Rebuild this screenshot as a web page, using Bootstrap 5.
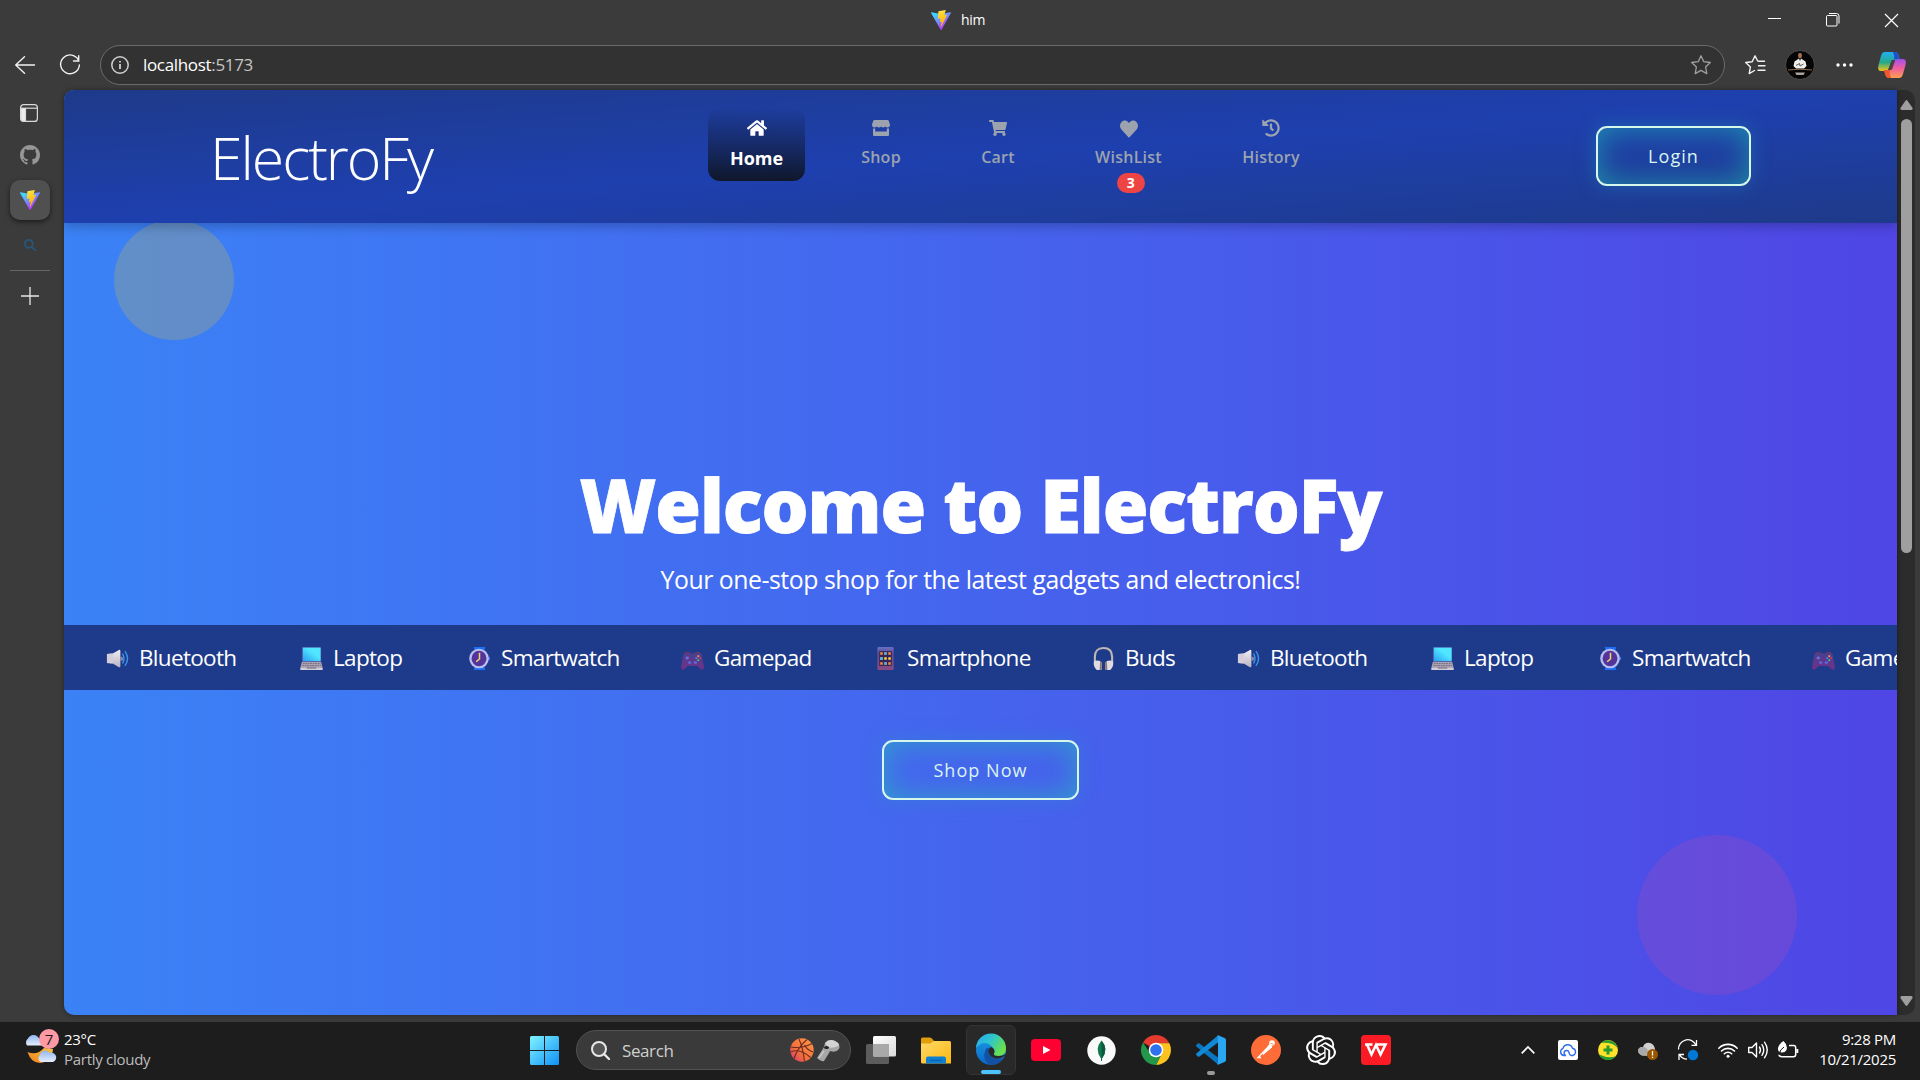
<!DOCTYPE html>
<html lang="en">
<head>
<meta charset="utf-8">
<title>him</title>
<link href="https://cdn.jsdelivr.net/npm/bootstrap@5.3.0/dist/css/bootstrap.min.css" rel="stylesheet">
<style>
body{width:1920px;height:1080px;overflow:hidden;background:#3b3b3b;color:#fff;font-family:"Open Sans","Noto Sans",sans-serif;line-height:1}
svg{display:block;flex:none;overflow:visible}
.titlebar{height:40px;padding:0 22px 0 931px}
.titlebar .tab-name{font-size:14px;margin-left:10px;letter-spacing:-.3px}
.winbtns{gap:45px}
.toolbar{height:50px;padding:0 12px 0 15px}
.address{width:1625px;height:40px;margin-left:20px;padding:0 13px 0 10px;background:#323232;border:1px solid #6b6b6b;border-radius:20px}
.address .url{font-size:17px;letter-spacing:-.33px;margin:-2px 0 0 14px;white-space:nowrap}
.address .port{color:#c5c5c5}
.workspace{height:925px}
.rail{width:64px;padding:14px 4px 0 0}
.rail-tile{width:40px;height:40px;background:#505050;border-radius:10px;box-shadow:0 2px 5px rgba(0,0,0,.55)}
.rail-line{width:40px;height:1px;background:#666}
.viewport{width:1833px;height:925px;border-radius:10px 0 0 10px;overflow:hidden;background:linear-gradient(to right,#3b82f6,#4f46e5);box-shadow:0 0 5px rgba(0,0,0,.4)}
.sitenav{height:133px;background:linear-gradient(to bottom right,#1e3a8a,#1e40af,#1e3a8a);box-shadow:0 4px 10px rgba(0,0,0,.22);z-index:2;padding:0 146px 0 146px}
.logo-text{font-size:59px;font-weight:300;letter-spacing:-2.05px;line-height:60px;padding-top:37px;white-space:nowrap;width:498px}
.navtab{font-size:16px;font-weight:600;letter-spacing:.25px;color:#9ca3af;white-space:nowrap}
.navtab svg{fill:#9ca3af}
.navtab.current{width:97px;height:73px;border-radius:12px;background:linear-gradient(to bottom,rgba(15,23,42,0),#0f172a);color:#fff;font-size:18px;font-weight:700;letter-spacing:0}
.navtab.current svg{fill:#fff}
.count{height:20px;width:28px;border-radius:10px;background:#ef4444;color:#fff;font-size:14px;font-weight:700}
.glowbtn{height:60px;border:2px solid #d6f8ea;border-radius:11px;color:#d9f5f0;font-size:18px;letter-spacing:1.05px;background:transparent;box-shadow:inset 0 0 30px rgba(32,200,180,.58),0 0 20px rgba(40,150,200,.38);padding:0}
.glowbtn:hover{color:#d9f5f0}
.hero{height:792px;z-index:1}
.deco1{width:120px;height:120px;left:50px;top:-3px;background:#facc15;opacity:.2}
.deco2{width:160px;height:160px;left:1573px;top:612px;background:#ec4899;opacity:.16}
.headline{font-size:74px;font-weight:800;letter-spacing:-1.1px;-webkit-text-stroke:.8px #fff;margin:242px 0 0;line-height:80px;white-space:nowrap}
.subline{font-size:24.8px;letter-spacing:-.46px;margin:17px 0 0;line-height:34px;white-space:nowrap}
.ticker{height:65px;background:#1e3a8a;margin-top:29px;padding:1px 0 0 42px;font-size:22.5px;letter-spacing:-.68px;overflow:hidden;white-space:nowrap}
.ticker .goods{flex:none;display:flex;align-items:center}
.ticker .goods svg{margin-right:10px}
.w-blue{width:194px}.w-lap{width:168px}.w-watch{width:213px}.w-pad{width:193px}.w-phone{width:218px}.w-buds{width:145px}
.scroller{width:18px;height:925px;background:#2c2c2c;border-radius:0 10px 10px 0;padding:10px 0 9px}
.thumb{width:11px;height:434px;border-radius:6px;background:#9f9f9f}
.taskbar{height:59px;margin-top:6px;background:#1d1d1d;border-top:1px solid #3a3a3a;padding-bottom:2px}
.weather{width:519px;padding-left:24px;font-size:15px;letter-spacing:-.28px}
.dim{color:#bcbcbc}
.tile{width:50px;height:50px;border-radius:6px;flex:none}
.tile.active-app{background:#292929;border:1px solid #343434}
.dash{height:4px;border-radius:2px;bottom:0;left:50%;transform:translateX(-50%)}
.findbox{width:275px;height:40px;border-radius:20px;background:#3a3a3a;border:1px solid #525252;margin:0 5px 0 7px;padding:0 10px 0 14px;font-size:17px;letter-spacing:-.4px;color:#cfcfcf}
.apps{gap:5px}
.tray{width:399px}
.clock{font-size:15px;letter-spacing:-.28px;width:80px}
</style>
<script src="https://cdn.jsdelivr.net/npm/bootstrap@5.3.0/dist/js/bootstrap.bundle.min.js"></script>
</head>
<body>
<svg width="0" height="0" class="position-absolute">
<defs>
<linearGradient id="vA" x1="0" y1=".3" x2=".5" y2="1"><stop stop-color="#41d1ff"/><stop offset="1" stop-color="#bd34fe"/></linearGradient>
<linearGradient id="vB" x1=".4" y1="0" x2=".6" y2="1"><stop stop-color="#ffea83"/><stop offset=".1" stop-color="#ffdd35"/><stop offset="1" stop-color="#ffa800"/></linearGradient>
<linearGradient id="gWin" x1="0" y1="0" x2="1" y2="1"><stop stop-color="#80f4ff"/><stop offset="1" stop-color="#0f90f7"/></linearGradient>
<linearGradient id="gScr" x1="1" y1="0" x2="0" y2="1"><stop offset=".4" stop-color="#50e6ff"/><stop offset="1" stop-color="#2b9ff5"/></linearGradient>
<linearGradient id="gSpk" x1="0" y1="0" x2="0" y2="1"><stop stop-color="#f0eef4"/><stop offset="1" stop-color="#b9b3c2"/></linearGradient>
<linearGradient id="gPad" x1="0" y1="0" x2="0" y2="1"><stop stop-color="#4c3f8e"/><stop offset="1" stop-color="#71308a"/></linearGradient>
<linearGradient id="gPhone" x1="0" y1="0" x2="0" y2="1"><stop stop-color="#6a6fc4"/><stop offset=".3" stop-color="#5b4c93"/><stop offset="1" stop-color="#8a4a80"/></linearGradient>
<linearGradient id="gBall" x1="1" y1="0" x2="0" y2="1"><stop stop-color="#ff9a45"/><stop offset=".6" stop-color="#f4703c"/><stop offset="1" stop-color="#d6336c"/></linearGradient>
<linearGradient id="gFold" x1="0" y1="0" x2="1" y2="1"><stop stop-color="#ffd96b"/><stop offset="1" stop-color="#fdb80e"/></linearGradient>
<linearGradient id="gCloud" x1="0" y1="0" x2="0" y2="1"><stop stop-color="#8fb4f2"/><stop offset="1" stop-color="#e6effc"/></linearGradient>
<linearGradient id="gMoon" x1="1" y1="0" x2="0" y2="1"><stop stop-color="#f6c542"/><stop offset="1" stop-color="#f07f1c"/></linearGradient>
<linearGradient id="eA" x1="0" y1="0" x2="1" y2=".5"><stop stop-color="#2aa8ee"/><stop offset=".5" stop-color="#2cc5cf"/><stop offset="1" stop-color="#6be04c"/></linearGradient>
<linearGradient id="eB" x1="0" y1="0" x2="0" y2="1"><stop stop-color="#1b9de2"/><stop offset="1" stop-color="#0a66c9"/></linearGradient>
<linearGradient id="cA" x1="0" y1="0" x2="0" y2="1"><stop stop-color="#21b0f5"/><stop offset=".55" stop-color="#27a887"/><stop offset="1" stop-color="#f5c518"/></linearGradient>
<linearGradient id="cB" x1="0" y1="0" x2="0" y2="1"><stop stop-color="#a44df0"/><stop offset=".5" stop-color="#f0609a"/><stop offset="1" stop-color="#fca04c"/></linearGradient>
<linearGradient id="gTv" x1="0" y1="0" x2="1" y2="1"><stop stop-color="#fff"/><stop offset="1" stop-color="#dadada"/></linearGradient>
<symbol id="vite" viewBox="0 0 256 257" preserveAspectRatio="none"><path fill="url(#vA)" d="M255.153 37.938L134.897 252.976c-2.483 4.44-8.862 4.466-11.382.048L.875 37.958c-2.746-4.814 1.371-10.646 6.827-9.67l120.385 21.517a6.537 6.537 0 0 0 2.322-.004l117.867-21.483c5.438-.991 9.574 4.796 6.877 9.62Z"/><path fill="url(#vB)" d="M185.432.063L96.44 17.501a3.268 3.268 0 0 0-2.634 3.014l-5.474 92.456a3.268 3.268 0 0 0 3.997 3.378l24.777-5.718c2.318-.535 4.413 1.507 3.936 3.838l-7.361 36.047c-.495 2.426 1.782 4.5 4.151 3.78l15.304-4.649c2.372-.72 4.652 1.36 4.15 3.788l-11.698 56.621c-.732 3.542 3.979 5.473 5.943 2.437l1.313-2.028l72.516-144.72c1.215-2.423-.88-5.186-3.54-4.672l-25.505 4.922c-2.396.462-4.435-1.77-3.759-4.114l16.646-57.705c.677-2.35-1.37-4.583-3.769-4.113Z"/></symbol>
<symbol id="e-spk" viewBox="0 0 24 28" preserveAspectRatio="none"><path fill="url(#gSpk)" d="M1 8.5L7 8 13.500 3.500Q15 3 15 5V23Q15 25 13.500 24.500L7 20 1 19.500Z"/><path d="M1 8.5L7 8V20L1 19.500Z" fill="#d3ced9"/><path d="M15 11.500a2.500 2.500 0 0 1 0 5.500Z" fill="#8f89a3"/><path d="M17.500 8.500Q20 14 17.500 19.500M20 5.500Q25 14 20 22.500" fill="none" stroke="#3b94e8" stroke-width="1.500" stroke-linecap="round"/></symbol>
<symbol id="e-lap" viewBox="0 0 24 28" preserveAspectRatio="none"><rect x="2" y="0" width="20" height="18" rx="1" fill="#4a5aa8"/><rect x="3" y=".8" width="18.500" height="16.200" fill="url(#gScr)"/><path d="M2 18H22L23.500 24.500V28H.500V24.500Z" fill="#aca4b4"/><path d="M3 20H21.500M2.500 22.500H22" stroke="#6d6578" stroke-width="1" stroke-dasharray="1.800 .8"/><path d="M.500 25.500H23.500V28H.500Z" fill="#d3cdd8"/><rect x="7" y="24" width="10" height="2.500" fill="#8f879b"/></symbol>
<symbol id="e-watch" viewBox="0 0 24 28" preserveAspectRatio="none"><path d="M6 0H18L17 6H7ZM7 22H17L18 28H6Z" fill="#1f6ff2"/><rect x="20.500" y="12" width="2.500" height="4" rx="1" fill="#3a7bf0"/><ellipse cx="11.500" cy="14" rx="10.200" ry="12" fill="#b9bdf0"/><ellipse cx="11.500" cy="14" rx="7.800" ry="9.300" fill="#53349a"/><path d="M12 7V14.500L8.500 18" stroke="#f2d36b" stroke-width="1.600" fill="none"/></symbol>
<symbol id="e-pad" viewBox="0 0 24 28" preserveAspectRatio="none"><path d="M4 7H9.500L10.500 8H13.500L14.500 7H20Q22 8 22.500 15L24 25Q23 29.500 20 26.500L17 23H7L4 26.500Q1 29.500 0 25L1.500 15Q2 8 4 7Z" fill="url(#gPad)"/><path d="M4 6.800H9M15 6.800H20" stroke="#8a2f4a"/><circle cx="6.500" cy="13.500" r="1.800" fill="#6a6fe0"/><circle cx="9" cy="19" r="1.800" fill="#5b68d8"/><circle cx="15" cy="19" r="1.800" fill="#5b68d8"/><circle cx="18" cy="11" r="1.100" fill="#ffb43a"/><circle cx="20" cy="13.500" r="1.100" fill="#e84040"/><circle cx="16" cy="13.500" r="1.100" fill="#3fa0f0"/><circle cx="18" cy="16" r="1.100" fill="#3fd08a"/></symbol>
<symbol id="e-phone" viewBox="0 0 24 28" preserveAspectRatio="none"><rect x="3.500" y="0" width="17" height="28" rx="1.500" fill="url(#gPhone)"/><rect x="5.500" y="5" width="13" height="18" fill="#372456"/><path d="M6.500 8H17.500M6.500 20H17.500" stroke="#ff8b3d" stroke-width="3" stroke-dasharray="2.600 1.600"/><path d="M6.500 14H17.500" stroke="#ffd34a" stroke-width="3" stroke-dasharray="2.600 1.600"/><path d="M10.700 8h2.600M6.500 14h2.600M10.700 20h2.600" stroke="#38b6f5" stroke-width="3"/></symbol>
<symbol id="e-buds" viewBox="0 0 24 28" preserveAspectRatio="none"><path d="M3 17V12Q3 1.200 12 1.200T21 12V17" fill="none" stroke="#bdb6b4" stroke-width="2.200"/><path d="M2 17Q8 15 10 19V28H5Q1 24 2 17ZM22 17Q16 15 14 19V28H19Q23 24 22 17Z" fill="#dedbe2"/><path d="M8.500 17L10 19V28H8ZM15.500 17L14 19V28H16Z" fill="#8d7a72"/></symbol>
</defs>
</svg>

<header class="titlebar d-flex align-items-center">
  <svg width="20" height="20"><use href="#vite"/></svg>
  <span class="tab-name">him</span>
  <div class="winbtns d-flex align-items-center ms-auto">
    <svg width="13" height="14" fill="none" stroke="#fff"><path d="M0 5.500H13"/></svg>
    <svg width="14" height="14" fill="none" stroke="#fff"><rect x=".500" y="2.500" width="10.500" height="10.500" rx="1"/><path d="M3 .500H10.500Q13 .500 13 3V10.500"/></svg>
    <svg width="13" height="13" fill="none" stroke="#fff" stroke-width="1.200"><path d="M0 0L13 13M13 0L0 13"/></svg>
  </div>
</header>

<div class="toolbar d-flex align-items-center">
  <svg width="20" height="18" fill="none" stroke="#f2f2f2" stroke-width="1.400" stroke-linecap="round" stroke-linejoin="round"><path d="M9.500 .700L.700 9 9.500 17.300M.700 9H19.500"/></svg>
  <svg width="20" height="20" style="margin-left:25px" fill="none" stroke="#f2f2f2" stroke-width="1.400" stroke-linecap="round"><path d="M18.600 5.500A9.400 9.400 0 1 0 19.400 10M18.700 .700V6H13.500"/></svg>
  <div class="address d-flex align-items-center">
    <svg width="18" height="18" fill="none" stroke="#d0d0d0" stroke-width="1.500"><circle cx="9" cy="9" r="8.200"/><path d="M9 8V13M9 5V6.600" stroke-width="1.800"/></svg>
    <span class="url">localhost<span class="port">:5173</span></span>
    <svg class="ms-auto" width="20" height="20" viewBox="0 0 20 20" fill="none" stroke="#a0a0a0" stroke-width="1.300" stroke-linejoin="round"><path d="M10 .800L12.800 6.700 19.300 7.500 14.600 12 15.800 18.600 10 15.400 4.200 18.600 5.400 12 .700 7.500 7.200 6.700Z"/></svg>
  </div>
  <svg width="21" height="20" style="margin-left:20px" fill="none" stroke="#f2f2f2" stroke-width="1.400" stroke-linejoin="round" stroke-linecap="round"><path d="M19.500 6.200H14L12.700 6 10 .800 7.200 6.700.700 7.500 5.400 12 4.200 18.600 9.500 15.500M13.500 10.800H20M13 15.300H20"/></svg>
  <svg width="30" height="30" style="margin-left:19px"><circle cx="15" cy="15" r="14.500" fill="#050505" stroke="#4d4d4d"/><ellipse cx="15" cy="5.500" rx="2" ry="2.700" fill="#a4714d"/><path d="M12.500 9.500L14 8.500 15 11 16 8.500 17.500 9.500 20.500 11.500 21.500 16 19 18.500H11L8.500 16 9.500 11.500Z" fill="#f1efec"/><path d="M11 15.500L14.500 13.500 15 16 18.500 14" stroke="#555" fill="none"/><path d="M3 20Q15 18.500 27 20" stroke="#8d6b4e" fill="none"/><path d="M10 22.500H20L18.500 25H11.500Z" fill="#a9a49d"/></svg>
  <svg width="17" height="4" style="margin-left:21px" fill="#fff"><circle cx="2" cy="2" r="1.700"/><circle cx="8.500" cy="2" r="1.700"/><circle cx="15" cy="2" r="1.700"/></svg>
  <svg width="28" height="26" viewBox="0 0 28 26" style="margin-left:25px"><path d="M7 0H17Q20 0 21 5L22 8H14L10 18Q9 19 3 19 -1 19 .500 13L3 4Q4 0 7 0Z" fill="url(#cA)"/><path d="M15 0H17.500Q20 .500 20.500 4L21.500 7.500H16Q17 4 15 0Z" fill="#1f4fd0"/><path d="M21 26H11Q8 26 7 21L6 18H13L17 8Q18 7 25 7 29 7 27.500 13L25 22Q24 26 21 26Z" fill="url(#cB)"/><path d="M6 18H12Q11 22 13 26H11Q8 26 7 22Z" fill="#f2562f"/><path d="M13.500 8.500H17L14 17.500H10.500Z" fill="#4b4042"/></svg>
</div>

<main class="workspace d-flex">
  <aside class="rail d-flex flex-column align-items-center">
    <svg width="18" height="18" style="margin-right:2px" fill="none" stroke="#d9d9d9" stroke-width="1.200"><rect x=".600" y=".600" width="16.800" height="16.800" rx="3"/><path d="M1 4.200H17"/><path d="M1 4.500H5.500V17H3Q1 17 1 15Z" fill="#eee"/></svg>
    <svg width="20" height="20" viewBox="0 0 16 16" style="margin-top:23px" fill="#969696"><path d="M8 0C3.580 0 0 3.580 0 8c0 3.540 2.290 6.530 5.470 7.590.4.070.550-.170.550-.380 0-.190-.010-.820-.010-1.490-2.010.370-2.530-.490-2.690-.940-.090-.230-.480-.940-.820-1.130-.280-.150-.680-.520-.010-.530.630-.010 1.080.580 1.230.820.720 1.210 1.870.870 2.330.660.070-.520.280-.870.510-1.070-1.780-.2-3.640-.890-3.640-3.950 0-.870.310-1.590.820-2.150-.080-.2-.360-1.020.080-2.120 0 0 .670-.210 2.200.820.640-.180 1.320-.270 2-.270s1.360.090 2 .270c1.530-1.040 2.200-.820 2.200-.820.440 1.100.160 1.920.080 2.120.510.560.820 1.270.820 2.150 0 3.070-1.870 3.750-3.650 3.950.290.250.540.730.540 1.480 0 1.070-.010 1.930-.010 2.200 0 .210.150.460.550.380A8.010 8.010 0 0 0 16 8c0-4.420-3.580-8-8-8z"/></svg>
    <div class="rail-tile d-flex align-items-center justify-content-center" style="margin-top:15px"><svg width="20" height="20"><use href="#vite"/></svg></div>
    <svg width="12" height="12" style="margin-top:19px" fill="none" stroke="#25567d" stroke-width="1.700"><circle cx="4.800" cy="4.800" r="4"/><path d="M7.800 7.800L12 12"/></svg>
    <div class="rail-line" style="margin-top:19px"></div>
    <svg width="18" height="18" style="margin:16px 1px 0 0" stroke="#e8e8e8" stroke-width="1.300"><path d="M9 0V18M0 9H18"/></svg>
  </aside>

  <section class="viewport position-relative">
    <nav class="sitenav position-relative d-flex">
      <div class="logo-text">ElectroFy</div>
      <div class="d-flex align-items-start" style="width:640px">
        <div class="navtab current d-flex flex-column align-items-center" style="margin-top:18px">
          <svg width="20" height="18" viewBox="0 0 576 512" style="margin-top:11px"><path d="M280.370 148.260L96 300.110V464a16 16 0 0 0 16 16l112.060-.290a16 16 0 0 0 15.920-16V368a16 16 0 0 1 16-16h64a16 16 0 0 1 16 16v95.640a16 16 0 0 0 16 16.050L464 480a16 16 0 0 0 16-16V300L295.670 148.260a12.190 12.190 0 0 0-15.300 0zM571.600 251.470L488 182.560V44.050a12 12 0 0 0-12-12h-56a12 12 0 0 0-12 12v72.610L318.470 43a48 48 0 0 0-61 0L4.340 251.470a12 12 0 0 0-1.600 16.900l25.500 31A12 12 0 0 0 45.150 301l235.220-193.740a12.190 12.190 0 0 1 15.300 0L530.900 301a12 12 0 0 0 16.900-1.600l25.500-31a12 12 0 0 0-1.700-16.930z"/></svg>
          <span style="margin-top:12px">Home</span>
        </div>
        <div class="navtab d-flex flex-column align-items-center" style="margin:30px 0 0 56px;width:40px">
          <svg width="18" height="16" viewBox="0 0 18 16"><path d="M2.500 0H15.500Q16.500 0 16.800 1L18 4.500Q18 7.500 15.500 7.500 14 7.500 13.200 6.500 12.400 7.500 11.100 7.500T9 6.500Q8.200 7.500 6.900 7.500T4.800 6.500Q4 7.500 2.500 7.500 0 7.500 0 4.500L1.200 1Q1.500 0 2.500 0ZM1 8.500H3.200V11.500H14.800V8.500H17V15Q17 16 16 16H2Q1 16 1 15Z"/></svg>
          <span style="margin-top:13px">Shop</span>
        </div>
        <div class="navtab d-flex flex-column align-items-center" style="margin:30px 0 0 80px;width:34px">
          <svg width="18" height="16" viewBox="0 0 576 512"><path d="M528.120 301.319l47.273-208C578.806 78.301 567.391 64 551.990 64H159.208l-9.166-44.810C147.758 8.021 137.930 0 126.529 0H24C10.745 0 0 10.745 0 24v16c0 13.255 10.745 24 24 24h69.883l70.248 343.435C147.325 417.100 136 435.222 136 456c0 30.928 25.072 56 56 56s56-25.072 56-56c0-15.674-6.447-29.835-16.824-40h209.647C430.447 426.165 424 440.326 424 456c0 30.928 25.072 56 56 56s56-25.072 56-56c0-22.172-12.888-41.332-31.579-50.405l5.517-24.276c3.413-15.018-8.002-29.319-23.403-29.319H218.117l-6.545-32h293.145c11.206 0 20.920-7.754 23.403-18.681z"/></svg>
          <span style="margin-top:13px">Cart</span>
        </div>
        <div class="navtab d-flex flex-column align-items-center" style="margin:30px 0 0 80px;width:67px">
          <svg width="18" height="18" viewBox="0 16 512 480" preserveAspectRatio="none"><path d="M462.300 62.600C407.500 15.900 326 24.300 275.700 76.200L256 96.500l-19.700-20.300C186.100 24.300 104.500 15.900 49.700 62.600c-62.800 53.600-66.100 149.800-9.900 207.900l193.500 199.800c12.500 12.900 32.800 12.900 45.300 0l193.500-199.800c56.300-58.100 53-154.300-9.800-207.900z"/></svg>
          <span style="margin-top:11px">WishList</span>
          <span class="count d-flex align-items-center justify-content-center" style="margin:8px 0 0 5px">3</span>
        </div>
        <div class="navtab d-flex flex-column align-items-center" style="margin:29px 0 0 80px;width:58px">
          <svg width="18" height="18" viewBox="0 0 512 512"><path d="M504 255.531c.253 136.640-111.180 248.372-247.820 248.468-59.015.042-113.223-20.530-155.822-54.911-11.077-8.940-11.905-25.541-1.839-35.607l11.267-11.267c8.609-8.609 22.353-9.551 31.891-1.984C173.062 425.135 212.781 440 256 440c101.705 0 184-82.311 184-184 0-101.705-82.311-184-184-184-48.814 0-93.149 18.969-126.068 49.932l50.754 50.754c10.080 10.080 2.941 27.314-11.313 27.314H24c-8.837 0-16-7.163-16-16V38.627c0-14.254 17.234-21.393 27.314-11.314l49.372 49.372C129.209 34.136 189.552 8 256 8c136.810 0 247.747 110.780 248 247.531zm-180.912 78.784l9.823-12.630c8.138-10.463 6.253-25.542-4.210-33.679L288 256.349V152c0-13.255-10.745-24-24-24h-16c-13.255 0-24 10.745-24 24v135.651l65.409 50.874c10.463 8.137 25.541 6.253 33.679-4.210z"/></svg>
          <span style="margin-top:12px">History</span>
        </div>
      </div>
      <button class="btn glowbtn ms-auto" style="width:155px;margin-top:36px">Login</button>
    </nav>

    <div class="hero position-relative d-flex flex-column align-items-center">
      <div class="deco1 position-absolute rounded-circle"></div>
      <div class="deco2 position-absolute rounded-circle"></div>
      <h1 class="headline">Welcome to ElectroFy</h1>
      <p class="subline">Your one-stop shop for the latest gadgets and electronics!</p>
      <div class="ticker w-100 d-flex">
        <div class="goods w-blue"><svg width="23" height="23"><use href="#e-spk"/></svg><span>Bluetooth</span></div>
        <div class="goods w-lap"><svg width="23" height="23"><use href="#e-lap"/></svg><span>Laptop</span></div>
        <div class="goods w-watch"><svg width="23" height="23"><use href="#e-watch"/></svg><span>Smartwatch</span></div>
        <div class="goods w-pad"><svg width="23" height="23"><use href="#e-pad"/></svg><span>Gamepad</span></div>
        <div class="goods w-phone"><svg width="23" height="23"><use href="#e-phone"/></svg><span>Smartphone</span></div>
        <div class="goods w-buds"><svg width="23" height="23"><use href="#e-buds"/></svg><span>Buds</span></div>
        <div class="goods w-blue"><svg width="23" height="23"><use href="#e-spk"/></svg><span>Bluetooth</span></div>
        <div class="goods w-lap"><svg width="23" height="23"><use href="#e-lap"/></svg><span>Laptop</span></div>
        <div class="goods w-watch"><svg width="23" height="23"><use href="#e-watch"/></svg><span>Smartwatch</span></div>
        <div class="goods w-pad"><svg width="23" height="23"><use href="#e-pad"/></svg><span>Gamepad</span></div>
      </div>
      <button class="btn glowbtn" style="width:197px;margin-top:50px">Shop Now</button>
    </div>
  </section>

  <div class="scroller d-flex flex-column align-items-center">
    <svg width="13" height="10" fill="#9f9f9f"><path d="M5.500 .700Q6.500 -.500 7.500 .700L12.600 8Q13 9.500 11.500 10H1.500Q0 9.500 .400 8Z"/></svg>
    <div class="thumb" style="margin-top:9px"></div>
    <svg class="mt-auto" width="13" height="10" fill="#9f9f9f"><path d="M5.500 9.300Q6.500 10.500 7.500 9.300L12.600 2Q13 .500 11.500 0H1.500Q0 .500 .400 2Z"/></svg>
  </div>
</main>

<footer class="taskbar d-flex align-items-center">
  <div class="weather d-flex align-items-center">
    <svg width="36" height="36" viewBox="0 0 36 36" style="margin-top:-6px"><path d="M3 16.500a5 5 0 0 1 1-7A6 6 0 0 1 14 8l6 8.500Z" fill="url(#gCloud)"/><path d="M3.500 23Q13 27 20 19L29 20Q28 33 16 34 7 34 3.500 23Z" fill="url(#gMoon)"/><path d="M17 33a4 4 0 0 1-1-7 5.500 5.500 0 0 1 10-2 4.500 4.500 0 0 1 3 9Z" fill="url(#gCloud)"/><circle cx="25" cy="10" r="10" fill="#ff99a4"/><text x="25" y="15.500" font-size="15" text-anchor="middle" fill="#1b1b1b">7</text></svg>
    <div style="margin:-2px 0 0 4px"><div>23°C</div><div class="dim" style="margin-top:5px">Partly cloudy</div></div>
  </div>
  <div class="tile d-flex align-items-center justify-content-center"><svg width="29" height="29" fill="url(#gWin)"><path d="M1.500 0H14V14H0V1.500Q0 0 1.500 0ZM15 0H27.500Q29 0 29 1.500V14H15ZM0 15H14V29H1.500Q0 29 0 27.500ZM15 15H29V27.500Q29 29 27.500 29H15Z"/></svg></div>
  <div class="findbox d-flex align-items-center">
    <svg width="19" height="19" fill="none" stroke="#e8e8e8" stroke-width="2"><circle cx="8" cy="8" r="7" fill="#555"/><path d="M13 13L18 18" stroke-width="2.400" stroke-linecap="round"/></svg>
    <span style="margin-left:12px">Search</span>
    <svg class="ms-auto" width="24" height="24" fill="none" stroke="#6b2b25" stroke-width="1.100"><circle cx="12" cy="12" r="11.700" fill="url(#gBall)" stroke="none"/><path d="M9 1Q13 10 14.500 23.500M1 9Q12 11 22 5.500M17 1.500Q8 9 4 20.500M.600 14Q10 10 20.500 19.500M23 14Q17 12 14.500 7"/></svg>
    <svg width="24" height="24" style="margin-left:2px"><path d="M9 5Q13 0 19 3T23 11Q20 15 14 13L13 15 8 23Q6 24 1 20L8 9Z" fill="#a7a7a7"/><path d="M9 5Q13 0 19 3T22 8Q16 11 12 9Z" fill="#d4d4d4"/><ellipse cx="10.500" cy="9.500" rx="2.500" ry="1.500" fill="#222"/><path d="M8 13L3 20" stroke="#ddd"/></svg>
  </div>
  <div class="apps d-flex align-items-center">
    <div class="tile d-flex align-items-center justify-content-center"><svg width="30" height="28"><rect y="8" width="23" height="20" rx="1.500" fill="#5c5c5c"/><rect x="7" width="23" height="20.500" rx="1.500" fill="url(#gTv)"/><path d="M7 8H23V20.500H8.500Q7 20.500 7 19Z" fill="#a9a9a9"/></svg></div>
    <div class="tile d-flex align-items-center justify-content-center"><svg width="30" height="27"><path d="M0 2Q0 .500 1.500 .500H9Q11 .500 13 4V7H0Z" fill="#e09f09"/><path d="M0 6.500H9.500L13 4H28.500Q30 4 30 5.500V26.500H1.500Q0 26.500 0 25Z" fill="url(#gFold)"/><path d="M5 26.500V21.500Q5 19.500 7 19.500H23Q25 19.500 25 21.500V26.500Z" fill="#0f7fd4"/><path d="M9 23.300H21" stroke="#0a5c9c"/></svg></div>
    <div class="tile active-app position-relative d-flex align-items-center justify-content-center"><svg width="30" height="30" viewBox="0 0 30 30"><circle cx="15" cy="15" r="15" fill="url(#eB)"/><path d="M0 13A15 15 0 0 1 30 14Q30 21 22 21 17 21 18 18.500 19 14.500 16 11.500 8 4 0 13Z" fill="url(#eA)"/><path d="M10 14Q5 24 14 29.900 22 31 27.500 23Q22 26 16.500 22.500 11.500 19 13.500 13.500 11 12 10 14Z" fill="#1352a3"/><path d="M13.500 13Q10.500 19 17 22.500 23 25.500 28.500 21L30 25 28 24Q29 21 29 19 27 21 22 21 17 21 18 18.500 20 14 15 12Z" fill="#292929"/></svg><span class="dash position-absolute" style="width:20px;background:#4cc2ff"></span></div>
    <div class="tile d-flex align-items-center justify-content-center"><svg width="30" height="22"><rect width="30" height="22" rx="4" fill="#ff0033"/><path d="M12 7L19.500 11 12 15Z" fill="#fff"/></svg></div>
    <div class="tile d-flex align-items-center justify-content-center"><svg width="29" height="29"><circle cx="14.500" cy="14.500" r="14.200" fill="#fafafa"/><path d="M14.500 4.500Q22 13 15 22.500V25H14V22.500Q7 13 14.500 4.500Z" fill="#127a50"/><path d="M14.500 4.500Q22 13 15 22.500H14.500Z" fill="#0c5a3f"/></svg></div>
    <div class="tile d-flex align-items-center justify-content-center"><svg width="30" height="30" viewBox="0 0 30 30"><path d="M15 15L2 7.500A15 15 0 0 1 28 7.500L28 8.500H15Z" fill="#e33b2e"/><path d="M15 15V8.300H28.400A15 15 0 0 1 15 30L20.800 18.400Z" fill="#fcc31e"/><path d="M2 7.500A15 15 0 0 0 15 30L20.800 18.400 9.200 18.400Z" fill="#23974a"/><circle cx="15" cy="15" r="7.300" fill="#fff"/><circle cx="15" cy="15" r="5.800" fill="#2f72ee"/></svg></div>
    <div class="tile position-relative d-flex align-items-center justify-content-center"><svg width="30" height="30" viewBox="0 0 30 30"><path d="M.300 10L2 8.300Q2.700 8 3.500 8.500L22 22.500V29.500L.300 11.500Q-.300 10.700 .300 10Z" fill="#0b76c0"/><path d="M.300 20L2 21.700Q2.700 22 3.500 21.500L22 7.500V.500L.300 18.500Q-.300 19.300 .300 20Z" fill="#1189d4"/><path d="M22 .200L28.500 3Q30 3.700 30 5V25Q30 26.300 28.500 27L22 29.800 21 29Q22 29 22 27V3Q22 1 21 1Z" fill="#2aa7f2"/></svg><span class="dash position-absolute" style="width:8px;background:#9a9a9a"></span></div>
    <div class="tile d-flex align-items-center justify-content-center"><svg width="30" height="30"><circle cx="15" cy="15" r="15" fill="#ff6c37"/><circle cx="21" cy="8" r="2.800" fill="#fff"/><path d="M18.500 9.500L21 12 12 19.500Z" fill="#fff" stroke="#fff" stroke-linejoin="round"/><path d="M18 11L7 22.500H10" stroke="#fff" stroke-width="1.300" fill="none"/><path d="M19.500 8L22.500 9.500" stroke="#ff6c37" stroke-width=".8"/></svg></div>
    <div class="tile d-flex align-items-center justify-content-center"><svg width="30" height="30" viewBox="0 0 24 24" fill="#fff"><path d="M22.2819 9.8211a5.9847 5.9847 0 0 0-.5157-4.9108 6.0462 6.0462 0 0 0-6.5098-2.9A6.0651 6.0651 0 0 0 4.9807 4.1818a5.9847 5.9847 0 0 0-3.9977 2.9 6.0462 6.0462 0 0 0 .7427 7.0966 5.98 5.98 0 0 0 .511 4.9107 6.051 6.051 0 0 0 6.5146 2.9001A5.9847 5.9847 0 0 0 13.2599 24a6.0557 6.0557 0 0 0 5.7718-4.2058 5.9894 5.9894 0 0 0 3.9977-2.9001 6.0557 6.0557 0 0 0-.7475-7.0729zm-9.022 12.6081a4.4755 4.4755 0 0 1-2.8764-1.0408l.1419-.0804 4.7783-2.7582a.7948.7948 0 0 0 .3927-.6813v-6.7369l2.02 1.1686a.071.071 0 0 1 .038.052v5.5826a4.504 4.504 0 0 1-4.4945 4.4944zm-9.6607-4.1254a4.4708 4.4708 0 0 1-.5346-3.0137l.142.0852 4.783 2.7582a.7712.7712 0 0 0 .7806 0l5.8428-3.3685v2.3324a.0804.0804 0 0 1-.0332.0615L9.74 19.9502a4.4992 4.4992 0 0 1-6.1408-1.6464zM2.3408 7.8956a4.485 4.485 0 0 1 2.3655-1.9728V11.6a.7664.7664 0 0 0 .3879.6765l5.8144 3.3543-2.0201 1.1685a.0757.0757 0 0 1-.071 0l-4.8303-2.7865A4.504 4.504 0 0 1 2.3408 7.872zm16.5963 3.8558L13.1038 8.364 15.1192 7.2a.0757.0757 0 0 1 .071 0l4.8303 2.7913a4.4944 4.4944 0 0 1-.6765 8.1042v-5.6772a.79.79 0 0 0-.407-.667zm2.0107-3.0231l-.142-.0852-4.7735-2.7818a.7759.7759 0 0 0-.7854 0L9.409 9.2297V6.8974a.0662.0662 0 0 1 .0284-.0615l4.8303-2.7866a4.4992 4.4992 0 0 1 6.6802 4.66zM8.3065 12.863l-2.02-1.1638a.0804.0804 0 0 1-.038-.0567V6.0742a4.4992 4.4992 0 0 1 7.3757-3.4537l-.142.0805L8.704 5.459a.7948.7948 0 0 0-.3927.6813zm1.0976-2.3654l2.602-1.4998 2.6069 1.4998v2.9994l-2.5974 1.4997-2.6067-1.4997Z"/></svg></div>
    <div class="tile d-flex align-items-center justify-content-center"><svg width="30" height="30" fill="none" stroke="#fff" stroke-width="2.600"><rect width="30" height="30" rx="4" fill="#fb1b24" stroke="none"/><path d="M4 9.500H11.500M6 9.500L10.500 19.500 15 10L19.500 19.500 24.500 9.500H16"/></svg></div>
  </div>
  <div class="tray d-flex align-items-center ms-auto">
    <svg width="14" height="8" fill="none" stroke="#fff" stroke-width="1.700"><path d="M.700 7.300L7 1 13.300 7.300"/></svg>
    <svg width="20" height="20" style="margin-left:23px"><rect width="20" height="20" rx="2" fill="#fff"/><path d="M5.500 15.500a3.800 3.800 0 0 1-.500-7.200A5 5 0 0 1 14.500 8.200 3.800 3.800 0 0 1 15 15.500H13.500Q11.500 15.500 11 12.500A2.500 2.500 0 1 0 8 15.500Z" fill="none" stroke="#2f6df0" stroke-width="1.400"/></svg>
    <svg width="20" height="20" style="margin-left:20px"><circle cx="10" cy="10" r="10" fill="#ffe12c"/><path d="M3 3A10 10 0 0 1 19.500 8Q15 2 3 3ZM1 14.500A10 10 0 0 0 18 16Q11 19 1 14.500Z" fill="#279b2f"/><path d="M8.500 5.500H11.500V8.500H14.500V11.500H11.500V14.500H8.500V11.500H5.500V8.500H8.500Z" fill="#279b2f"/></svg>
    <svg width="20" height="20" style="margin-left:20px"><path d="M4 15.500Q-1 13 .500 9 2 6.500 5 7 7 2 12 3 16 4 17 9L16 16Z" fill="#d1d1d1"/><path d="M5 7Q9 7 10 11L8 15.500H4Q-1 13 .500 9 2 6.500 5 7Z" fill="#a9a9a9"/><circle cx="14.500" cy="14.500" r="5.500" fill="#9b5600"/><path d="M14.500 11V15.500M14.500 16.700V18" stroke="#fff" stroke-width="1.300"/></svg>
    <svg width="20" height="20" style="margin-left:20px" fill="none" stroke="#fff" stroke-width="1.300"><path d="M.500 9.500A9.200 9.200 0 0 1 18 5M18.500 0V5.300H13.500M9 19.200Q4 19 1.800 15M1 20V14.500H6"/><circle cx="15" cy="15" r="5.200" fill="#0078d7" stroke="none"/></svg>
    <svg width="20" height="15" style="margin-left:20px" fill="none" stroke="#fff" stroke-width="1.600" stroke-linecap="round"><path d="M.800 5.200A13 13 0 0 1 19.200 5.200M3.500 8A9.300 9.300 0 0 1 16.500 8M6.300 10.800A5.300 5.300 0 0 1 13.700 10.800"/><circle cx="10" cy="13.300" r="1.200" fill="#fff" stroke-width=".6"/></svg>
    <svg width="20" height="18" style="margin-left:10px" fill="none" stroke="#fff" stroke-width="1.400" stroke-linecap="round" stroke-linejoin="round"><path d="M.700 6.500H4L8.500 2V16L4 11.500H.700ZM11.500 6Q13.500 9 11.500 12M14 3.700Q17.500 9 14 14.300M16.500 1.200Q22 9 16.500 16.800"/></svg>
    <svg width="22" height="18" style="margin-left:9px" fill="none" stroke="#fff" stroke-width="1.500"><path d="M12 4.500H16.500Q18.700 4.500 18.700 6.700V13.500Q18.700 15.700 16.500 15.700H5Q2 15.700 2 13.500"/><path d="M20.300 8V12" stroke-width="2"/><path d="M6.500 0Q11 4 9.500 9 8 12 4 11.500 .500 11 1 7 2 3 6.500 0Z" fill="#fff" stroke="none"/><path d="M2 14Q3 8 7 6" stroke="#1d1d1d" stroke-width="1"/></svg>
    <div class="clock text-end ms-auto" style="margin:-1px 24px 0 0"><div>9:28 PM</div><div style="margin-top:5px">10/21/2025</div></div>
  </div>
</footer>
</body>
</html>
